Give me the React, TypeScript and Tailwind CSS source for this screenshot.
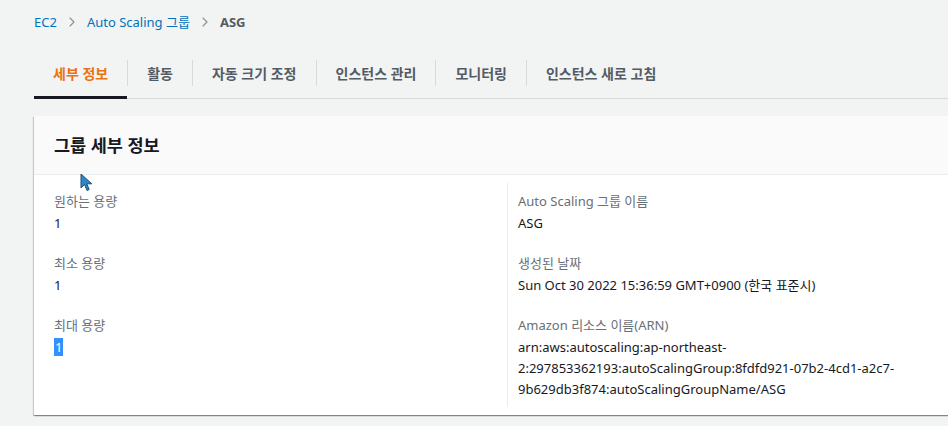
import { ChevronRight } from "lucide-react";

const FONT = "font-['Noto_Sans','Noto_Sans_CJK_KR',sans-serif]";

const TABS = ["세부 정보", "활동", "자동 크기 조정", "인스턴스 관리", "모니터링", "인스턴스 새로 고침"];

function Field({ label, children }: { label: string; children: React.ReactNode }) {
  return (
    <div className="mb-[19px]">
      <div className="text-[13px] leading-5 text-[#687078]">{label}</div>
      <div className="mt-[2px] text-[13px] leading-[21px] text-[#16191f]">{children}</div>
    </div>
  );
}

export default function App() {
  return (
    <div className={`relative min-h-screen w-full overflow-hidden bg-[#f2f3f3] pl-[34px] ${FONT}`}>
      {/* Breadcrumb */}
      <nav className="flex h-5 items-center gap-[7px] mt-3 text-[13px] leading-5">
        <span className="text-[#0073bb]">EC2</span>
        <ChevronRight className="h-4 w-4 text-[#879596]" strokeWidth={1.75} />
        <span className="text-[#0073bb]">Auto Scaling 그룹</span>
        <ChevronRight className="h-4 w-4 text-[#879596]" strokeWidth={1.75} />
        <span className="font-bold text-[#545b64]">ASG</span>
      </nav>

      {/* Tabs */}
      <div className="mt-4 flex h-[51px] items-center border-b border-[#d5dbdb]">
        {TABS.map((tab, i) => (
          <div key={tab} className="flex h-full items-center">
            {i > 0 && <span className="h-[26px] w-px bg-[#d5dbdb]" />}
            <div
              className={`relative flex h-full items-center px-[19px] text-[14px] font-bold ${
                i === 0 ? "text-[#ec7211]" : "text-[#545b64]"
              }`}
            >
              {tab}
              {i === 0 && <span className="absolute bottom-[-1px] left-0 right-0 h-[3px] bg-[#16191f]" />}
            </div>
          </div>
        ))}
      </div>

      {/* Card */}
      <section className="mt-[17px] w-[980px] bg-white shadow-[0_1px_1px_0_rgba(0,28,36,0.3),1px_1px_1px_0_rgba(0,28,36,0.15),-1px_1px_1px_0_rgba(0,28,36,0.15)]">
        <header className="flex h-[59px] items-center border-b border-[#eaeded] bg-[#fafafa] px-5">
          <h2 className="text-[17.5px] font-bold text-[#16191f]">그룹 세부 정보</h2>
        </header>
        <div className="grid grid-cols-[473px_1fr]">
          <div className="px-5 pt-4">
            <Field label="원하는 용량">1</Field>
            <Field label="최소 용량">1</Field>
            <Field label="최대 용량">
              <span className="bg-[#3390ff] px-px text-white">1</span>
            </Field>
          </div>
          <div className="my-2 border-l border-[#eaeded] pl-[10px] pt-2">
            <Field label="Auto Scaling 그룹 이름">ASG</Field>
            <Field label="생성된 날짜">Sun Oct 30 2022 15:36:59 GMT+0900 (한국 표준시)</Field>
            <div className="mb-[7px]">
              <div className="text-[13px] leading-5 text-[#687078]">Amazon 리소스 이름(ARN)</div>
              <div className="mt-[2px] text-[13px] leading-[21px] text-[#16191f]">
                arn:aws:autoscaling:ap-northeast-
                <br />
                2:297853362193:autoScalingGroup:8fdfd921-07b2-4cd1-a2c7-
                <br />
                9b629db3f874:autoScalingGroupName/ASG
              </div>
            </div>
          </div>
        </div>
      </section>

      {/* Mouse pointer */}
      <svg className="absolute left-[80px] top-[173px]" width="14" height="19" viewBox="0 0 14 19">
        <path d="M1 1 L1 15 L4.5 11.5 L7 17.5 L9.2 16.5 L6.8 10.8 L11.8 10.8 Z" fill="#2f86c8" stroke="#1b4f7a" strokeWidth="1" strokeLinejoin="round" />
      </svg>
    </div>
  );
}
